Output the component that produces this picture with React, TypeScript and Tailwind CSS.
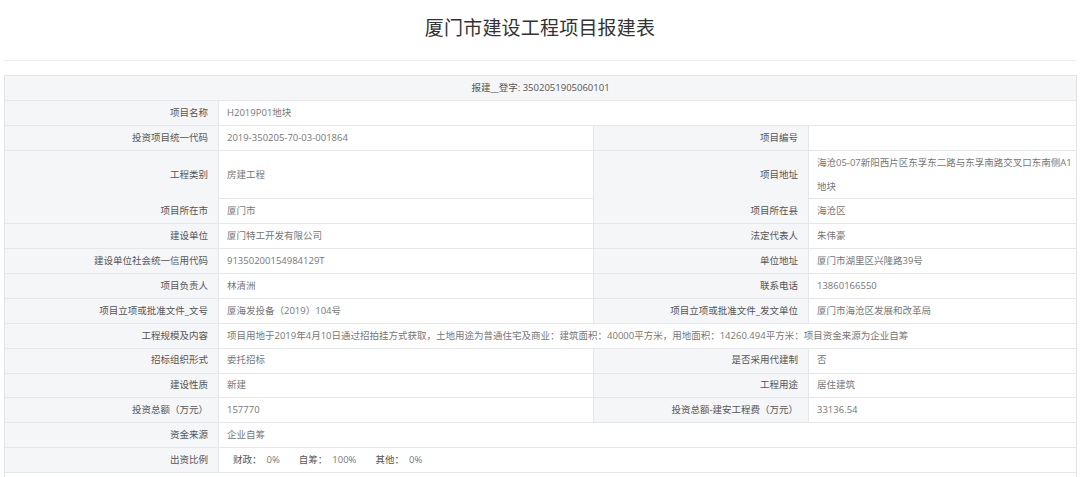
import React from "react";

const FONT = "font-['Open_Sans','Noto_Sans_CJK_SC',sans-serif]";
const L =
  "flex items-center justify-end pr-[10px] bg-[#f5f6f8] text-[#555] whitespace-nowrap";
const V = "flex items-center pl-[8px] text-[#777] whitespace-nowrap";
const ROW = "grid border-b border-[#e6e7ea] h-[24.9px]";
const COLS4 = "grid-cols-[214px_375px_215px_1fr]";
const COLS2 = "grid-cols-[214px_1fr]";

type Four = [string, React.ReactNode, string, React.ReactNode];

function Row4({ cells, tall }: { cells: Four; tall?: boolean }) {
  return (
    <div
      className={`grid ${COLS4} border-b border-[#e6e7ea] ${
        tall ? "h-[48.6px]" : "h-[24.9px]"
      }`}
    >
      <div className={`${L} border-r border-[#e6e7ea]`}>{cells[0]}</div>
      <div className={`${V} border-r border-[#e6e7ea]`}>{cells[1]}</div>
      <div className={`${L} border-r border-[#e6e7ea]`}>{cells[2]}</div>
      <div className={V}>{cells[3]}</div>
    </div>
  );
}

function Row2({ label, value }: { label: string; value: React.ReactNode }) {
  return (
    <div className={`${ROW} ${COLS2}`}>
      <div className={`${L} border-r border-[#e6e7ea]`}>{label}</div>
      <div className={V}>{value}</div>
    </div>
  );
}

export default function App() {
  return (
    <div className={`${FONT} bg-white w-[1080px] h-[477px] overflow-hidden px-[4px] text-[9.5px]`}>
      <div className="h-[61px] border-b border-[#eeeeee] flex items-center justify-center pb-[6px]">
        <h1 className="text-[19px] text-[#333] font-normal tracking-[0.2px] font-['Noto_Sans_CJK_SC',sans-serif]">
          厦门市建设工程项目报建表
        </h1>
      </div>

      <div className="mt-[14px] w-[1073px] border border-[#e2e3e6]">
        <div className="h-[24.9px] border-b border-[#e6e7ea] bg-[#f5f6f8] flex items-center justify-center text-[#555]">
          报建__登字: 3502051905060101
        </div>

        <Row2 label="项目名称" value="H2019P01地块" />
        <Row4 cells={["投资项目统一代码", "2019-350205-70-03-001864", "项目编号", ""]} />
        <div className={`grid ${COLS4} border-b border-[#e6e7ea] h-[48.6px]`}>
          <div className={`${L} border-r border-[#e6e7ea]`}>工程类别</div>
          <div className={`${V} border-r border-[#e6e7ea]`}>房建工程</div>
          <div className={`${L} border-r border-[#e6e7ea]`}>项目地址</div>
          <div className="pl-[8px] text-[#777] leading-[24.3px] whitespace-nowrap">
            海沧05-07新阳西片区东孚东二路与东孚南路交叉口东南侧A1
            <br />
            地块
          </div>
        </div>
        <Row4 cells={["项目所在市", "厦门市", "项目所在县", "海沧区"]} />
        <Row4 cells={["建设单位", "厦门特工开发有限公司", "法定代表人", "朱伟豪"]} />
        <Row4
          cells={["建设单位社会统一信用代码", "91350200154984129T", "单位地址", "厦门市湖里区兴隆路39号"]}
        />
        <Row4 cells={["项目负责人", "林清洲", "联系电话", "13860166550"]} />
        <Row4
          cells={[
            "项目立项或批准文件_文号",
            "厦海发投备（2019）104号",
            "项目立项或批准文件_发文单位",
            "厦门市海沧区发展和改革局",
          ]}
        />
        <Row2
          label="工程规模及内容"
          value="项目用地于2019年4月10日通过招拍挂方式获取，土地用途为普通住宅及商业：建筑面积：40000平方米，用地面积：14260.494平方米：项目资金来源为企业自筹"
        />
        <Row4 cells={["招标组织形式", "委托招标", "是否采用代建制", "否"]} />
        <Row4 cells={["建设性质", "新建", "工程用途", "居住建筑"]} />
        <Row4 cells={["投资总额（万元）", "157770", "投资总额-建安工程费（万元）", "33136.54"]} />
        <Row2 label="资金来源" value="企业自筹" />
        <Row2
          label="出资比例"
          value={
            <span className="pl-[6px]">
              <span className="text-[#555]">财政：</span>
              <span className="ml-[5px]">0%</span>
              <span className="ml-[19px] text-[#555]">自筹：</span>
              <span className="ml-[5px]">100%</span>
              <span className="ml-[19px] text-[#555]">其他：</span>
              <span className="ml-[5px]">0%</span>
            </span>
          }
        />
        <div className="h-[24.9px] bg-white" />
      </div>
    </div>
  );
}
